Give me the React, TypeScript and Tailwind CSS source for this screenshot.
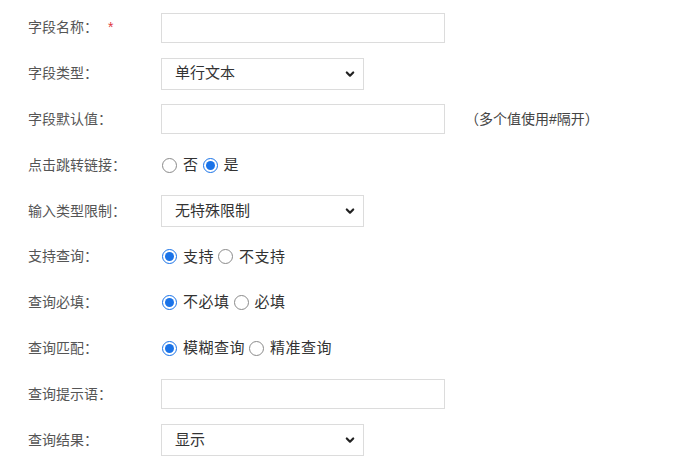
import { ReactNode } from 'react'

const font = { fontFamily: '"Liberation Sans", "Noto Sans CJK SC", sans-serif' }

function Row({ label, required, children }: { label: string; required?: boolean; children: ReactNode }) {
  return (
    <div className="flex h-[45.8px] items-center">
      <div className="w-[133px] shrink-0 text-[14px] text-[#555]">
        {label}
        {required && <span className="ml-[10px] text-[#e0393e]">*</span>}
      </div>
      {children}
    </div>
  )
}

function TextInput() {
  return <div className="h-[30px] w-[284px] border border-[#dcdcdc] bg-white" />
}

function Select({ value }: { value: string }) {
  return (
    <div className="flex h-[32px] w-[203px] items-center justify-between border border-[#dcdcdc] bg-white pl-[13px] pr-[7px] text-[15px] text-[#333]">
      <span>{value}</span>
      <svg width="12" height="12" viewBox="0 0 12 12">
        <path d="M2.8 4.5 6 7.7 9.2 4.5" fill="none" stroke="#222" strokeWidth="2.2" strokeLinecap="round" strokeLinejoin="round" />
      </svg>
    </div>
  )
}

function Radio({ checked, label }: { checked?: boolean; label: string }) {
  return (
    <span className="flex items-center">
      {checked ? (
        <span className="flex h-[15px] w-[15px] items-center justify-center rounded-full border-[1.5px] border-[#1a73e8] bg-white">
          <span className="h-[9px] w-[9px] rounded-full bg-[#1a73e8]" />
        </span>
      ) : (
        <span className="h-[15px] w-[15px] rounded-full border border-[#8a8a8a] bg-white" />
      )}
      <span className="ml-[6px] mr-[4px] text-[15px] tracking-[0.5px] text-[#333]">{label}</span>
    </span>
  )
}

export default function App() {
  return (
    <div className="h-[470px] w-[700px] bg-white pl-[28px] pt-[5px]" style={font}>
      <Row label="字段名称：" required>
        <TextInput />
      </Row>
      <Row label="字段类型：">
        <Select value="单行文本" />
      </Row>
      <Row label="字段默认值：">
        <TextInput />
        <span className="ml-[20px] text-[14px] text-[#444]">（多个值使用#隔开）</span>
      </Row>
      <Row label="点击跳转链接：">
        <div className="flex items-center pl-[1px]">
          <Radio label="否" />
          <Radio checked label="是" />
        </div>
      </Row>
      <Row label="输入类型限制：">
        <Select value="无特殊限制" />
      </Row>
      <Row label="支持查询：">
        <div className="flex items-center pl-[1px]">
          <Radio checked label="支持" />
          <Radio label="不支持" />
        </div>
      </Row>
      <Row label="查询必填：">
        <div className="flex items-center pl-[1px]">
          <Radio checked label="不必填" />
          <Radio label="必填" />
        </div>
      </Row>
      <Row label="查询匹配：">
        <div className="flex items-center pl-[1px]">
          <Radio checked label="模糊查询" />
          <Radio label="精准查询" />
        </div>
      </Row>
      <Row label="查询提示语：">
        <TextInput />
      </Row>
      <Row label="查询结果：">
        <Select value="显示" />
      </Row>
    </div>
  )
}
